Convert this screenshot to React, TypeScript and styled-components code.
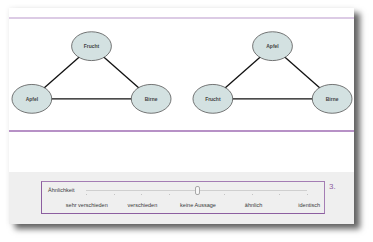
import React, { FC } from "react";
import styled, { createGlobalStyle } from "styled-components";

const GlobalStyle = createGlobalStyle`
  html, body {
    margin: 0;
    padding: 0;
    background: #fff;
    font-family: "Liberation Sans", Arial, sans-serif;
  }
`;

const Page = styled.div`
  width: 373px;
  height: 242px;
  padding: 8px 0 0 9px;
  box-sizing: border-box;
`;

const Card = styled.div`
  width: 345px;
  height: 216px;
  background: #fff;
  display: flex;
  flex-direction: column;
  box-shadow: 6px 5px 6px rgba(0, 0, 0, 0.6), 0 0 5px rgba(0, 0, 0, 0.08);
`;

const Rule = styled.div<{ $color: string; $top: number }>`
  height: 2px;
  margin-top: ${(p) => p.$top}px;
  background: ${(p) => p.$color};
`;

const GraphRow = styled.div`
  display: flex;
  gap: 17px;
  height: 111px;
`;

const Diagram = styled.svg`
  width: 165px;
  height: 111px;
  display: block;
`;

const Spacer = styled.div`
  height: 40px;
`;

const Footer = styled.div`
  flex: 1;
  background: #efefef;
  display: flex;
  align-items: flex-start;
  padding: 9px 0 0 32px;
`;

const RatingBox = styled.div`
  width: 284px;
  height: 33px;
  box-sizing: border-box;
  border: 1px solid #a47db4;
  border-left: 1.5px solid #8c5ea0;
  border-bottom: 1.5px solid #8c5ea0;
  display: flex;
  flex-direction: column;
  color: #3a3a3a;
`;

const SliderRow = styled.div`
  display: flex;
  align-items: center;
  height: 14px;
  padding: 1px 17px 0 6px;
`;

const Caption = styled.span`
  font-size: 5.5px;
  width: 38px;
`;

const Track = styled.div`
  position: relative;
  flex: 1;
  height: 1px;
  background: #cfcfcf;
`;

const Tick = styled.span<{ $pos: number }>`
  position: absolute;
  top: 4px;
  left: ${(p) => p.$pos}%;
  width: 1px;
  height: 1px;
  background: #c4c4c4;
`;

const Thumb = styled.span`
  position: absolute;
  left: 50%;
  top: -4px;
  width: 3px;
  height: 7px;
  margin-left: -2px;
  border: 1px solid #a8a8a8;
  border-radius: 2px;
  background: #f7f7f7;
`;

const Scale = styled.div`
  display: grid;
  grid-template-columns: repeat(5, 55.6px);
  padding-left: 17px;
  margin-top: 5px;
`;

const ScaleLabel = styled.span`
  font-size: 5.5px;
  text-align: center;
  white-space: nowrap;
`;

const Step = styled.span`
  color: #8c5ea0;
  font-size: 8px;
  margin: 1px 0 0 4px;
`;

interface IGraph {
  top: string;
  left: string;
  right: string;
}

const Node: FC<{ x: number; y: number; label: string }> = ({ x, y, label }) => (
  <g>
    <ellipse cx={x} cy={y} rx={20} ry={14.5} fill="#d3e1e1" stroke="#555" strokeWidth={0.8} />
    <text
      x={x}
      y={y + 1.8}
      textAnchor="middle"
      fontSize={5}
      fontWeight={700}
      fill="#444"
      fontFamily="Liberation Sans, Arial, sans-serif"
    >
      {label}
    </text>
  </g>
);

const Graph: FC<IGraph> = ({ top, left, right }) => {
  const t = { x: 83, y: 27 };
  const l = { x: 23, y: 80 };
  const r = { x: 143, y: 80 };
  return (
    <Diagram viewBox="0 0 165 111">
      <g stroke="#111" strokeWidth={1.3}>
        <line x1={t.x} y1={t.y} x2={l.x} y2={l.y} />
        <line x1={t.x} y1={t.y} x2={r.x} y2={r.y} />
        <line x1={l.x} y1={l.y} x2={r.x} y2={r.y} />
      </g>
      <Node x={t.x} y={t.y} label={top} />
      <Node x={l.x} y={l.y} label={left} />
      <Node x={r.x} y={r.y} label={right} />
    </Diagram>
  );
};

const labels = ["sehr verschieden", "verschieden", "keine Aussage", "ähnlich", "identisch"];
const ticks = [0, 12.5, 25, 37.5, 50, 62.5, 75, 87.5, 100];

export default function App() {
  return (
    <>
      <GlobalStyle />
      <Page>
        <Card>
          <Rule $color="#dccbe5" $top={9} />
          <GraphRow>
            <Graph top="Frucht" left="Apfel" right="Birne" />
            <Graph top="Apfel" left="Frucht" right="Birne" />
          </GraphRow>
          <Rule $color="#b791c6" $top={0} />
          <Spacer />
          <Footer>
            <RatingBox>
              <SliderRow>
                <Caption>Ähnlichkeit</Caption>
                <Track>
                  {ticks.map((t) => (
                    <Tick key={t} $pos={t} />
                  ))}
                  <Thumb />
                </Track>
              </SliderRow>
              <Scale>
                {labels.map((l) => (
                  <ScaleLabel key={l}>{l}</ScaleLabel>
                ))}
              </Scale>
            </RatingBox>
            <Step>3.</Step>
          </Footer>
        </Card>
      </Page>
    </>
  );
}
